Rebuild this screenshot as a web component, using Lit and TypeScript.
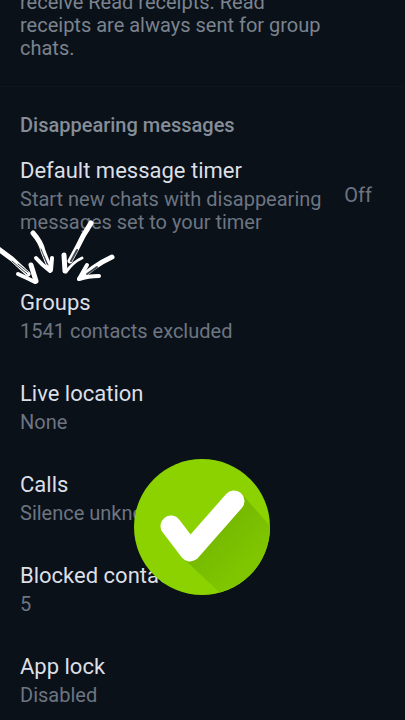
import { LitElement, html, css, svg } from "lit";
import { customElement, property } from "lit/decorators.js";

@customElement("setting-row")
class SettingRow extends LitElement {
  @property() heading = "";
  @property() detail = "";
  @property() value = "";

  static styles = css`
    :host { display: block; }
    .row {
      display: flex;
      align-items: center;
      gap: 16px;
      width: 100%;
      padding: 19px 33px 17px 20px;
      border: 0;
      background: none;
      color: inherit;
      font: inherit;
      text-align: left;
      cursor: pointer;
    }
    .copy { display: flex; flex-direction: column; gap: 2px; flex: 1; }
    .title { font-size: 22px; line-height: 30px; color: #dcdfe5; }
    .detail, .value { font-size: 20px; line-height: 23px; color: #6d7581; }
  `;

  render() {
    return html`<button class="row" type="button">
      <span class="copy">
        <span class="title">${this.heading}</span>
        <span class="detail">${this.detail}</span>
      </span>
      ${this.value ? html`<span class="value">${this.value}</span>` : ""}
    </button>`;
  }
}

const arrows = svg`
  <g fill="none" stroke="#fff" stroke-linecap="round" stroke-linejoin="round">
    <path stroke-width="5" d="M-3 30 L12 41 L28 56"/>
    <path stroke-width="5" d="M33 15 Q41 24 43 33 L49 48"/>
    <path stroke-width="5" d="M91 5 Q83 17 77 30 L70 43"/>
    <path stroke-width="5" d="M112 39 Q101 44 93 50 L84 57"/>
    <path stroke-width="5" d="M31 47 L36 63"/>
    <path stroke-width="4" d="M18 56 Q27 60 35 64"/>
    <path stroke-width="4" d="M52 40 L51 52"/>
    <path stroke-width="4" d="M36 40 Q42 47 50 53"/>
    <path stroke-width="5" d="M64 37 L65 53"/>
    <path stroke-width="3" d="M82 40 Q73 44 66 54"/>
    <path stroke-width="4" d="M87 47 L79 61"/>
    <path stroke-width="4" d="M79 61 Q88 58 99 58"/>
  </g>
  <g fill="none" stroke="#3f474f" stroke-width="1" stroke-linecap="round">
    <path d="M12 43 L27 56M18 46 L28 54"/>
    <path d="M41 31 L47 46M44 38 L48 47"/>
    <path stroke-width="2" d="M77 32 L71 43"/>
    <path stroke-width="2" d="M97 49 L87 56"/>
  </g>`;

@customElement("app-root")
class AppRoot extends LitElement {
  static styles = css`
    :host {
      display: block;
      position: relative;
      min-height: 100vh;
      overflow: hidden;
      background: #0a1119;
      font-family: Roboto, "Noto Sans", sans-serif;
    }
    .page { margin-top: -9px; }
    .note {
      margin: 0;
      padding: 0 80px 26px 20px;
      border-bottom: 1px solid #0f161d;
      font-size: 20px;
      line-height: 23px;
      color: #7b838e;
    }
    .section {
      margin: 0;
      padding: 26px 20px 0;
      font-size: 20px;
      line-height: 24px;
      font-weight: 500;
      color: #858d98;
    }
    .timer { margin-bottom: 18px; }
    .arrows { position: absolute; left: 0; top: 218px; pointer-events: none; }
    .badge { position: absolute; left: 50%; top: 458px; margin-left: -69px; }
  `;

  render() {
    return html`
      <main class="page">
        <p class="note">receive Read receipts. Read receipts are always sent for group chats.</p>
        <h2 class="section">Disappearing messages</h2>
        <setting-row class="timer" heading="Default message timer"
          detail="Start new chats with disappearing messages set to your timer" value="Off"></setting-row>
        <setting-row heading="Groups" detail="1541 contacts excluded"></setting-row>
        <setting-row heading="Live location" detail="None"></setting-row>
        <setting-row heading="Calls" detail="Silence unknown callers"></setting-row>
        <setting-row heading="Blocked contacts" detail="5"></setting-row>
        <setting-row heading="App lock" detail="Disabled"></setting-row>
      </main>
      <svg class="arrows" width="120" height="70" viewBox="0 0 120 70" aria-hidden="true">${arrows}</svg>
      <svg class="badge" width="138" height="138" viewBox="0 0 138 138" role="img" aria-label="Done">
        <defs>
          <clipPath id="disc"><circle cx="68" cy="69" r="68"/></clipPath>
          <linearGradient id="shade" gradientUnits="userSpaceOnUse" x1="75" y1="65" x2="115" y2="105">
            <stop offset="0" stop-color="#74b600"/>
            <stop offset="1" stop-color="#7fc600"/>
          </linearGradient>
        </defs>
        <circle cx="68" cy="69" r="68" fill="#8bd200"/>
        <path clip-path="url(#disc)" fill="url(#shade)" d="M49 100 L107 35 L150 84 L150 150 L102 150 Z"/>
        <path fill="none" stroke="#fff" stroke-width="21" stroke-linecap="round" stroke-linejoin="round"
          d="M37 68 L56 93 L100 43"/>
      </svg>`;
  }
}
